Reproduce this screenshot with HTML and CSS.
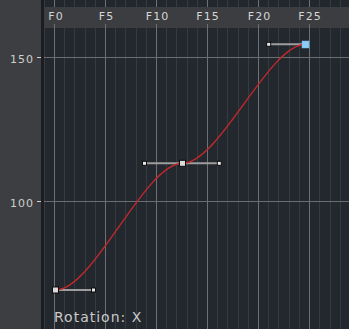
FILE: index.html
```html
<!DOCTYPE html>
<html>
<head>
<meta charset="utf-8">
<link rel="stylesheet" href="styles.css">
</head>
<body>
<div class="editor">
  <div class="axis">
    <svg class="axis-svg" width="41" height="329" viewBox="0 0 41 329">
      <text class="axis-label" x="34" y="63">150</text>
      <path class="axis-tick" d="M37 57.5H41"/>
      <text class="axis-label" x="34" y="207">100</text>
      <path class="axis-tick" d="M37 201.5H41"/>
    </svg>
  </div>
  <div class="sep"></div>
  <div class="main">
    <svg class="strip" width="305" height="7" viewBox="44 0 305 7">
      <path class="minor" d="M44.5 0V7M64.5 0V7M74.5 0V7M85.5 0V7M95.5 0V7M115.5 0V7M125.5 0V7M136.5 0V7M146.5 0V7M166.5 0V7M176.5 0V7M187.5 0V7M197.5 0V7M217.5 0V7M227.5 0V7M238.5 0V7M248.5 0V7M268.5 0V7M278.5 0V7M289.5 0V7M299.5 0V7M319.5 0V7M330.5 0V7M340.5 0V7"/>
      <path class="major" d="M54.5 0V7M105.5 0V7M156.5 0V7M207.5 0V7M258.5 0V7M309.5 0V7"/>
    </svg>
    <svg class="ruler" width="305" height="21" viewBox="44 7 305 21">
      <text class="frame" x="56" y="20">F0</text>
      <text class="frame" x="106.5" y="20">F5</text>
      <text class="frame" x="157.5" y="20">F10</text>
      <text class="frame" x="208" y="20">F15</text>
      <text class="frame" x="259.5" y="20">F20</text>
      <text class="frame" x="310" y="20">F25</text>
      <path class="major" d="M54.5 24V28M105.5 24V28M156.5 24V28M207.5 24V28M258.5 24V28M309.5 24V28"/>
    </svg>
    <div class="graph">
      <svg class="graph-svg" width="305" height="301" viewBox="44 28 305 301">
        <path class="minor" d="M44.5 28V329M64.5 28V329M74.5 28V329M85.5 28V329M95.5 28V329M115.5 28V329M125.5 28V329M136.5 28V329M146.5 28V329M166.5 28V329M176.5 28V329M187.5 28V329M197.5 28V329M217.5 28V329M227.5 28V329M238.5 28V329M248.5 28V329M268.5 28V329M278.5 28V329M289.5 28V329M299.5 28V329M319.5 28V329M330.5 28V329M340.5 28V329"/>
        <path class="major" d="M54.5 28V329M105.5 28V329M156.5 28V329M207.5 28V329M258.5 28V329M309.5 28V329"/>
        <path class="hline" d="M44 57.5H349M44 201.5H349"/>
        <path class="handle-line" d="M55.5 290H93.5M144.5 163.3H219.3M268.7 44.3H305.5"/>
        <path class="curve" d="M55.5 290C93.5 290 144.5 163.3 182.5 163.3C219.3 163.3 268.7 44.3 305.5 44.3"/>
        <rect class="handle" x="91.5" y="288" width="4" height="4"/>
        <rect class="handle" x="142.5" y="161.3" width="4" height="4"/>
        <rect class="handle" x="217.3" y="161.3" width="4" height="4"/>
        <rect class="handle" x="266.7" y="42.3" width="4" height="4"/>
        <rect class="key" x="52.5" y="287" width="6" height="6"/>
        <rect class="key" x="179.5" y="160.3" width="6" height="6"/>
        <rect class="key-active" x="302" y="41" width="7" height="7"/>
      </svg>
      <div class="channel">Rotation: X</div>
    </div>
  </div>
</div>
</body>
</html>
```
FILE: styles.css
```css
html, body {
  margin: 0;
  padding: 0;
  background: #3c3e41;
}
.editor {
  display: flex;
  width: 349px;
  height: 329px;
  overflow: hidden;
  font-family: "DejaVu Sans", "Liberation Sans", sans-serif;
}
.axis {
  width: 41px;
  flex: none;
  background: #3c3e41;
}
.axis-svg, .strip, .ruler, .graph-svg {
  display: block;
}
.axis-label {
  font-size: 11px;
  letter-spacing: 1px;
  fill: #cfcfcf;
  text-anchor: end;
}
.axis-tick {
  stroke: #cfcfcf;
  stroke-width: 1;
}
.sep {
  width: 3px;
  flex: none;
  background: #1b1d20;
}
.main {
  width: 305px;
  flex: none;
  display: flex;
  flex-direction: column;
}
.strip {
  background: #22262d;
}
.ruler {
  background: #3b3d41;
}
.frame {
  font-size: 11px;
  letter-spacing: 1px;
  fill: #d6d6d6;
  text-anchor: middle;
}
.graph {
  position: relative;
  flex: 1;
  background: #23272e;
}
.minor {
  stroke: #363a41;
  stroke-width: 1;
}
.major {
  stroke: #6e7073;
  stroke-width: 1;
}
.hline {
  stroke: #6a6c6f;
  stroke-width: 1;
}
.handle-line {
  stroke: #9d9d9d;
  stroke-width: 2;
}
.curve {
  fill: none;
  stroke: #c3292b;
  stroke-width: 1.4;
}
.handle {
  fill: #e8e8e8;
  stroke: #0d0d0d;
  stroke-width: 1;
}
.key {
  fill: #dcdcdc;
  stroke: #0d0d0d;
  stroke-width: 1;
}
.key-active {
  fill: #8ccbf6;
  stroke: #6fb4e6;
  stroke-width: 0.5;
}
.channel {
  position: absolute;
  left: 10px;
  bottom: 4px;
  font-size: 14px;
  letter-spacing: 1px;
  color: #cacaca;
  line-height: 16px;
}
```
